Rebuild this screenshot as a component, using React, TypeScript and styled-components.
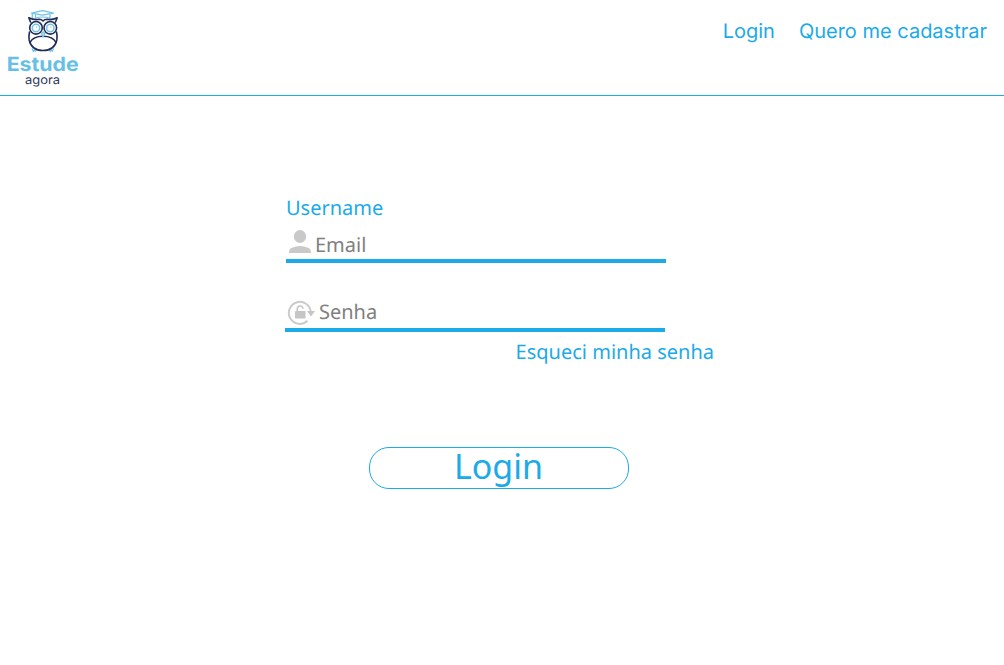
import React from "react";
import styled, { createGlobalStyle } from "styled-components";

const blue = "#1caae8";

const GlobalStyle = createGlobalStyle`
  body { margin: 0; background: #fff; font-family: "Noto Sans", sans-serif; text-rendering: geometricPrecision; }
  *, *::before, *::after { box-sizing: border-box; }
`;

const Page = styled.div`
  height: 665px;
  overflow: hidden;
`;

const Header = styled.header`
  display: flex;
  justify-content: space-between;
  align-items: flex-start;
  height: 96px;
  padding-right: 17px;
  border-bottom: 1px solid ${blue};
`;

const Logo = styled.svg`
  display: block;
  width: 90px;
  height: 94px;
`;

const Nav = styled.nav`
  display: flex;
  gap: 24px;
  padding-top: 19px;
`;

const NavLink = styled.a`
  color: ${blue};
  font: 20px/24px Inter, sans-serif;
  white-space: nowrap;
`;

const Form = styled.form`
  display: flex;
  flex-direction: column;
  width: 429px;
  margin: 98px 0 0 285px;
`;

const Label = styled.label`
  padding-left: 1px;
  color: ${blue};
  font-size: 20px;
  line-height: 27px;
`;

const Field = styled.div<{ $shift: number; $height: number }>`
  display: flex;
  align-items: flex-end;
  gap: 3px;
  width: 380px;
  height: ${(p) => p.$height}px;
  margin-left: ${(p) => p.$shift}px;
  border-bottom: 4px solid ${blue};
`;

const FieldIcon = styled.svg`
  flex: none;
  display: block;
`;

const Placeholder = styled.span<{ $lift: number }>`
  margin-bottom: ${(p) => p.$lift}px;
  color: #808080;
  font-size: 20px;
  line-height: 27px;
`;

const Forgot = styled.a`
  align-self: flex-end;
  margin-top: 6px;
  color: ${blue};
  font-size: 20px;
  line-height: 27px;
  white-space: nowrap;
`;

const Submit = styled.button`
  width: 260px;
  height: 42px;
  margin: 82px 0 0 84px;
  padding: 0 1px 4px 0;
  border: 1px solid ${blue};
  border-radius: 20px;
  background: #fff;
  color: ${blue};
  font: 34px/36px "Noto Sans", sans-serif;
`;

const OwlLogo = () => (
  <Logo viewBox="0 0 90 94" fill="none">
    <g stroke="#74c3e7" strokeWidth="1.2" strokeLinejoin="round" strokeLinecap="round">
      <path d="M31.5 13.2 42.5 10.6 53.5 13.2 42.5 15.2Z" />
      <path d="M35.500 14.500v3.700q7-2.400 14.500 0V14.500M32.300 14v4" />
      <path d="M32.200 48.800 33.300 51.500 34.300 49.500 35.300 51.500 36.500 50M49 50 50.200 51.500 51.200 49.500 52.200 51.500 53.400 48.800" />
    </g>
    <g stroke="#1f2c55" strokeWidth="1.6" strokeLinecap="round" strokeLinejoin="round">
      <path d="M30.500 22 28.800 17.800Q34 20.300 39 19.300 41.500 19.300 43 21 44.500 19.300 47 19.300 52 20.300 57.200 17.800L55.500 22" />
      <path d="M29.500 32Q28.500 36 29.200 40 31.500 50.500 43 50.500 54.500 50.500 56.800 40 57.500 36 56.500 32" />
      <circle cx="36" cy="27.800" r="6.300" />
      <circle cx="50.300" cy="27.800" r="6.300" />
      <path d="M30 42.500Q33 36.300 43 36.300T56 42.500" />
    </g>
    <g stroke="#74c3e7" strokeWidth="1.500">
      <circle cx="36" cy="28" r="3.700" />
      <circle cx="50.300" cy="28" r="3.700" />
      <path d="M36.200 27.200h.8M50.500 27.200h.8" strokeWidth="1.200" />
      <path d="M41.300 33.500 43.100 31.800 44.900 33.500 43.100 37Z" fill="#b9e1f3" strokeWidth="1.200" />
    </g>
    <text x="6.700" y="71" fill="#67bfe5" fontFamily="Inter, sans-serif" fontSize="19.500" fontWeight="700" textLength="72" lengthAdjust="spacingAndGlyphs">Estude</text>
    <text x="25" y="84" fill="#303857" fontFamily="Inter, sans-serif" fontSize="12" textLength="35" lengthAdjust="spacingAndGlyphs">agora</text>
  </Logo>
);

const UserIcon = () => (
  <FieldIcon width="26" height="32" viewBox="0 0 26 32" fill="#c9c9c9">
    <ellipse cx="14" cy="9.500" rx="6.200" ry="6.500" />
    <path d="M3 26q-.2-4 3-5.200Q10 19 14 19t8 1.800Q25.200 22 25 26Z" />
  </FieldIcon>
);

const LockIcon = () => (
  <FieldIcon width="31" height="29" viewBox="0 0 31 29" fill="none">
    <path d="M22.500 21.800A11 11 0 1 1 25.800 13" stroke="#cbcbcb" strokeWidth="2" />
    <path d="M22 12h8l-4 5.500Z" fill="#c6c6c6" />
    <rect x="10" y="12" width="10.500" height="7.500" rx=".8" fill="#c6c6c6" />
    <path d="M12.300 13V9.800a2.800 2.800 0 0 1 5.600 0" stroke="#c6c6c6" strokeWidth="1.600" />
  </FieldIcon>
);

export default function App() {
  return (
    <Page>
      <GlobalStyle />
      <Header>
        <OwlLogo />
        <Nav>
          <NavLink>Login</NavLink>
          <NavLink>Quero me cadastrar</NavLink>
        </Nav>
      </Header>
      <Form>
        <Label>Username</Label>
        <Field $shift={1} $height={42}>
          <UserIcon />
          <Placeholder $lift={1}>Email</Placeholder>
        </Field>
        <Field $shift={0} $height={69}>
          <LockIcon />
          <Placeholder $lift={3}>Senha</Placeholder>
        </Field>
        <Forgot>Esqueci minha senha</Forgot>
        <Submit type="button">Login</Submit>
      </Form>
    </Page>
  );
}
